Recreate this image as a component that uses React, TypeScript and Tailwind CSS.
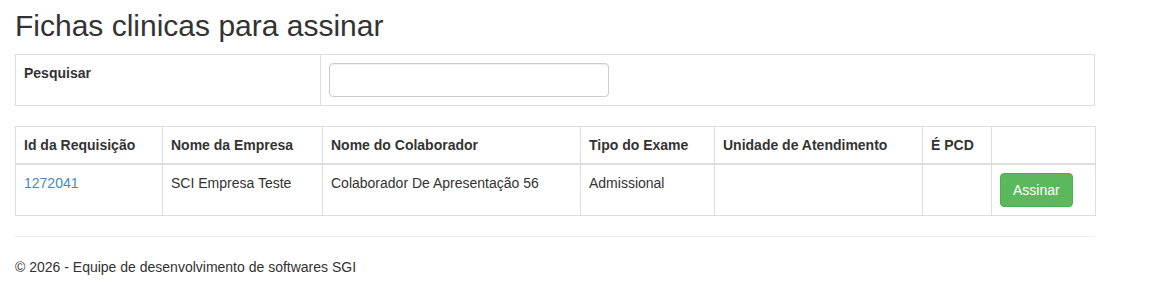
export default function App() {
  const headers = [
    'Id da Requisição',
    'Nome da Empresa',
    'Nome do Colaborador',
    'Tipo do Exame',
    'Unidade de Atendimento',
    'É PCD',
    '',
  ]
  const widths = ['w-[147px]', 'w-[160px]', 'w-[258px]', 'w-[134px]', 'w-[208px]', 'w-[69px]', 'w-[104px]']

  return (
    <div className="min-h-screen bg-white text-[14px] leading-[20px] text-[#333] font-['Liberation_Sans',Arial,sans-serif]">
      <div className="mx-[15px] w-[1080px]">
        <h2 className="pt-[9px] mb-[12px] text-[30px] leading-[33px] font-normal">Fichas clinicas para assinar</h2>

        {/* Search */}
        <table className="w-full table-fixed border-collapse border border-[#ddd] mb-[20px]">
          <colgroup>
            <col className="w-[305px]" />
            <col />
          </colgroup>
          <tbody>
            <tr>
              <td className="border border-[#ddd] p-[8px] align-top font-bold">Pesquisar</td>
              <td className="border border-[#ddd] p-[8px] align-top">
                <input
                  type="text"
                  className="block w-[280px] h-[34px] px-[12px] border border-[#ccc] rounded-[4px] shadow-[inset_0_1px_1px_rgba(0,0,0,0.075)] outline-none"
                />
              </td>
            </tr>
          </tbody>
        </table>

        {/* Results */}
        <table className="w-full table-fixed border-collapse border border-[#ddd] mb-[20px]">
          <colgroup>
            {widths.map((w, i) => (
              <col key={i} className={w} />
            ))}
          </colgroup>
          <thead>
            <tr>
              {headers.map((h, i) => (
                <th key={i} className="border border-[#ddd] border-b-2 p-[8px] text-left align-bottom font-bold">
                  {h}
                </th>
              ))}
            </tr>
          </thead>
          <tbody>
            <tr>
              <td className="border border-[#ddd] p-[8px] align-top">
                <a href="#" className="text-[#428bca]">1272041</a>
              </td>
              <td className="border border-[#ddd] p-[8px] align-top">SCI Empresa Teste</td>
              <td className="border border-[#ddd] p-[8px] align-top">Colaborador De Apresentação 56</td>
              <td className="border border-[#ddd] p-[8px] align-top">Admissional</td>
              <td className="border border-[#ddd] p-[8px] align-top"></td>
              <td className="border border-[#ddd] p-[8px] align-top"></td>
              <td className="border border-[#ddd] p-[8px] align-top">
                <button className="h-[34px] px-[12px] rounded-[4px] border border-[#4cae4c] bg-[#5cb85c] text-white">
                  Assinar
                </button>
              </td>
            </tr>
          </tbody>
        </table>

        <hr className="border-0 border-t border-[#eee] mt-[20px] mb-[20px]" />
        <footer>
          <p>© 2026 - Equipe de desenvolvimento de softwares SGI</p>
        </footer>
      </div>
    </div>
  )
}
